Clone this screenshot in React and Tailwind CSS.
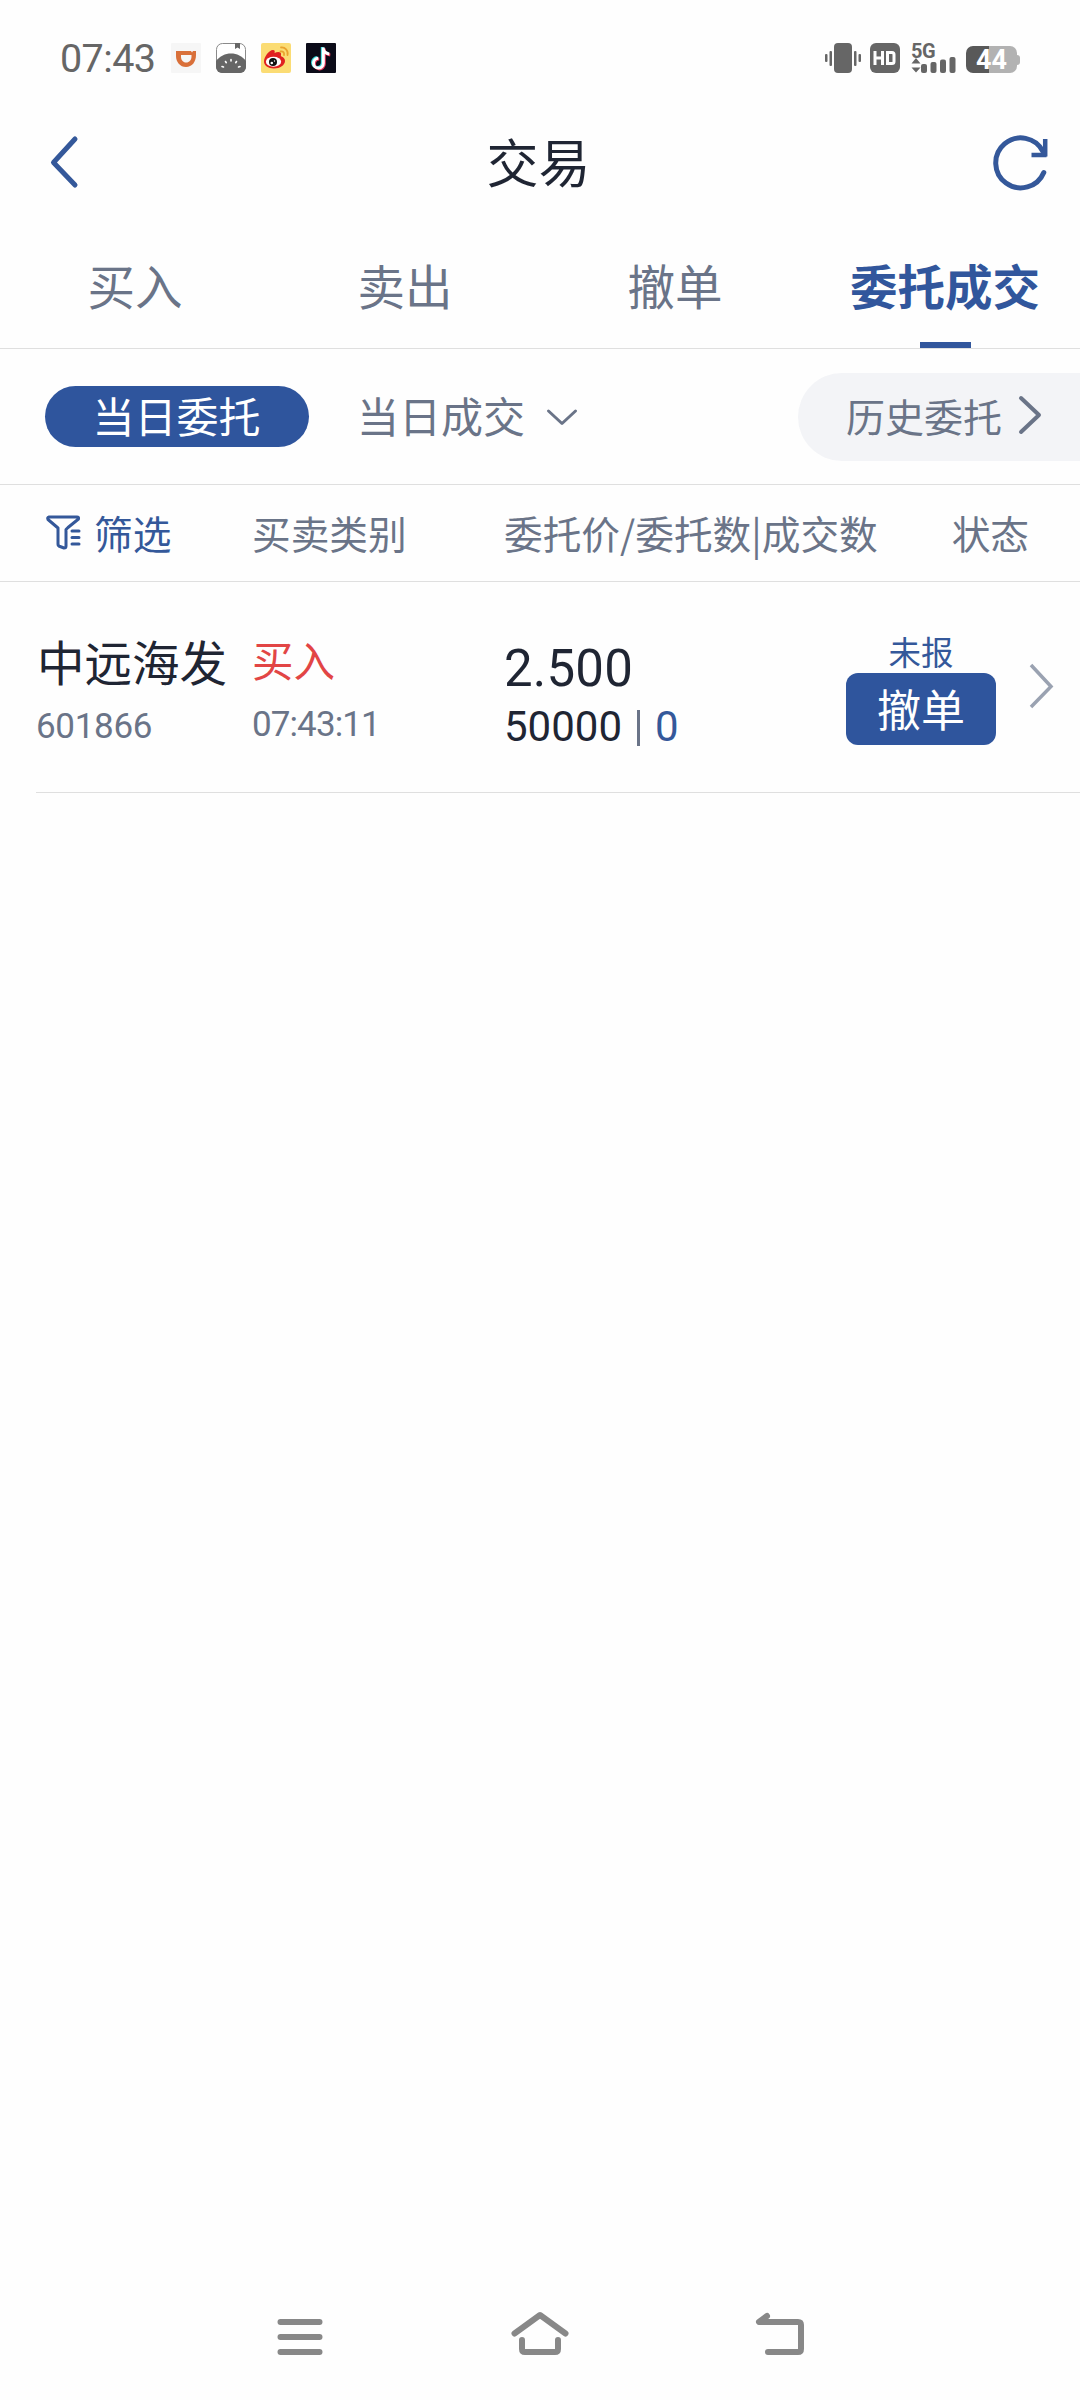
import React, { useState } from 'react';

const TABS = ['买入', '卖出', '撤单', '委托成交'];

const orders = [
    { id: 1, name: '中远海发', code: '601866', side: '买入', time: '07:43:11', price: '2.500', amount: '50000', filled: '0', status: '未报' },
];

const StatusBar = () => (
    <div className="h-[108px] pl-[60px] pr-[60px] pt-2 flex items-center justify-between">
        <div className="flex items-center">
            <span className="w-[111px] pt-[2px] font-['Roboto',sans-serif] text-[39.5px] leading-none tracking-[-0.6px] text-[#666]">07:43</span>
            <div className="flex gap-[15px]">
                {/* Didi */}
                <svg width="30" height="30" viewBox="0 0 30 30">
                    <rect width="30" height="30" rx="1" fill="#f6f6f6" />
                    <path d="M5 8h15l1 1.500 1-1.500h3v4c0 7-4 12-10 12S5 19 5 13zM10 12v1.500c0 3.500 2 6 5.200 6s5.300-2.500 5.300-6V12z" fill="#d9703a" fillRule="evenodd" />
                </svg>
                {/* Notes */}
                <svg width="30" height="30" viewBox="0 0 30 30">
                    <rect x="0.5" y="0.5" width="29" height="29" rx="6" fill="#fff" stroke="#8a8a8a" />
                    <path d="M0 18C4 13 9 10.500 15 10.500S26 13 30 18v6a6 6 0 0 1-6 6H6a6 6 0 0 1-6-6z" fill="#666" />
                    <path d="M19 0h5v6l-2.500-1.500L19 6z" fill="#666" />
                    <path d="M15 16.500v1.500M9.500 18.500l.8 1.200M20.500 18.500l-.8 1.200M6 23.500l1.500.5M24 23.500l-1.500.5" stroke="#fff" strokeWidth="1.600" strokeLinecap="round" />
                </svg>
                {/* Weibo */}
                <svg width="30" height="30" viewBox="0 0 30 30">
                    <rect width="30" height="30" rx="2" fill="#fbdc74" />
                    <path d="M12 7c2 0 2 1.500 1.500 3 3-1.500 7-1.500 6.500 1.500 0 1-.5 1.500.5 2 2.500 1 3.500 2.500 3.500 4.500 0 4-5 7.500-11 7.500S3 22.500 3 18.500C3 14 8 7 12 7z" fill="#e02020" />
                    <ellipse cx="12.500" cy="18.800" rx="7.600" ry="5" fill="#fff" />
                    <circle cx="12" cy="19" r="4" fill="#111" />
                    <circle cx="10.800" cy="20" r="1.300" fill="#fff" />
                    <circle cx="13.500" cy="18" r="0.700" fill="#fff" />
                    <path d="M20 4.500c4-.5 7.500 3 6.500 7.500M19.500 8.500c2.500-.5 4 1.200 3.500 3.500" fill="none" stroke="#eaa22e" strokeWidth="1.800" strokeLinecap="round" />
                </svg>
                {/* Douyin */}
                <svg width="30" height="30" viewBox="0 0 30 30" fill="none" strokeWidth="3">
                    <rect width="30" height="30" rx="1" fill="#0b0b18" />
                    <path d="M16.300 4v15.500a4.900 4.900 0 1 1-5-4.900M16.300 5.500c.7 3 2.700 4.500 6 4.900" stroke="#35d8dc" />
                    <path d="M18.300 5.500V21a4.900 4.900 0 1 1-5-4.900M18.300 7c.7 3 2.700 4.500 6 4.900" stroke="#e8385a" />
                    <path d="M17.300 4.500v15.700a4.900 4.900 0 1 1-5-4.900M17.300 6c.7 3 2.700 4.500 6 4.900" stroke="#fff" />
                </svg>
            </div>
        </div>
        <div className="flex items-center text-[#666]">
            {/* Vibrate */}
            <svg width="36" height="30" viewBox="0 0 36 30" fill="currentColor">
                <rect x="9" width="18" height="30" rx="4" />
                <rect x="0" y="11" width="2.500" height="8" rx="1" />
                <rect x="4.500" y="8" width="2.500" height="15" rx="1" />
                <rect x="29" y="8" width="2.500" height="15" rx="1" />
                <rect x="33.500" y="11" width="2.500" height="8" rx="1" />
            </svg>
            <svg className="ml-[9px]" width="30" height="30" viewBox="0 0 30 30">
                <rect width="30" height="30" rx="6" fill="#666" />
                <path d="M5 8v14M12.500 8v14M5 15h7.500M17.500 9.500h4.500q2 0 2 2v7q0 2-2 2h-4.500z" fill="none" stroke="#fff" strokeWidth="3" />
            </svg>
            <div className="ml-[11px] w-[46px] h-[30px]">
                <div className="h-[15px] font-['Roboto',sans-serif] font-bold text-[20px] leading-[16px] tracking-[-0.500px]">5G</div>
                <svg width="46" height="15" viewBox="0 0 46 15" fill="currentColor" overflow="visible">
                    <path d="M5 0l4.500 5.500H0.500zM5 14.500L0.500 9.500h9z" />
                    <rect x="10" y="6" width="6" height="9" rx="2" />
                    <rect x="19.500" y="4" width="6" height="11" rx="2" />
                    <rect x="29" y="1.500" width="6" height="13.500" rx="2" />
                    <rect x="38.500" y="-1" width="6" height="16" rx="2" />
                </svg>
            </div>
            <div className="ml-[9px] mt-[3px] flex items-center">
                <div className="w-[51px] h-[27px] rounded-[7px] bg-linear-to-r from-[#595959] from-45% to-[#b2b2b2] to-45% flex items-center justify-center">
                    <span className="font-['Roboto',sans-serif] font-bold text-[27px] leading-[28px] text-white">44</span>
                </div>
                <div className="w-[3px] h-[10px] rounded-r-[3px] bg-[#b2b2b2]" />
            </div>
        </div>
    </div>
);

const Header = () => (
    <div className="h-[108px] pl-[49px] pr-[30px] flex items-center justify-between">
        <svg className="mr-[6px]" width="30" height="54" viewBox="0 0 30 54" fill="none" stroke="#34589a" strokeWidth="5" strokeLinecap="round" strokeLinejoin="round">
            <path d="M26 4L4.500 27.500 26 50" />
        </svg>
        <h1 className="pb-[2px] text-[52px] leading-[60px] text-[#1f2533]">交易</h1>
        <svg width="58" height="58" viewBox="0 0 58 58" fill="none" stroke="#34589a" strokeWidth="5">
            <path d="M51.800 39.500A25 25 0 1 1 51 18.500" strokeLinecap="round" />
            <path d="M53.200 6v17.500M39.500 22h15" strokeWidth="4.500" strokeLinejoin="round" />
        </svg>
    </div>
);

const App = () => {
    const [activeTab, setActiveTab] = useState('委托成交');

    return (
        <div className="w-[1080px] h-[2400px] bg-[#fefefe] flex flex-col font-['Noto_Sans_CJK_SC',sans-serif] text-[#6a7488]">
            <StatusBar />
            <Header />

            {/* Abas principais */}
            <div className="h-[133px] flex border-b border-[#dfdfdf]">
                {TABS.map((tab) => (
                    <button
                        key={tab}
                        onClick={() => setActiveTab(tab)}
                        className={`w-[270px] flex flex-col items-center justify-between pt-[37px] text-[47.500px] leading-[64px] whitespace-nowrap ${tab === activeTab ? 'font-bold text-[#31569c]' : ''}`}
                    >
                        {tab}
                        {tab === activeTab && <span className="w-[51px] h-[6px] bg-[#31569c]" />}
                    </button>
                ))}
            </div>

            <div className="h-[136px] pl-[45px] flex items-center border-b border-[#dfdfdf]">
                <button className="w-[264px] h-[61px] pb-[4px] pr-[1px] rounded-full bg-[#2f559d] text-white text-[42px] leading-[56px]">当日委托</button>
                <button className="ml-[48px] pb-[2px] flex items-center text-[42px] leading-[56px]">
                    <span className="-mt-[2px]">当日成交</span>
                    <svg className="ml-[20px] mt-[2px]" width="34" height="20" viewBox="0 0 34 20" fill="none" stroke="currentColor" strokeWidth="3" strokeLinecap="round" strokeLinejoin="round">
                        <path d="M3.500 4L17 16.500 30.500 4" />
                    </svg>
                </button>
                <button className="ml-auto w-[282px] h-[88px] pl-[48px] rounded-l-full bg-[#f3f4f7] flex items-center text-[39px] leading-[56px]">
                    <span className="pb-[3px]">历史委托</span>
                    <svg className="ml-[15px] mb-[3px]" width="26" height="42" viewBox="0 0 26 42" fill="none" stroke="currentColor" strokeWidth="4" strokeLinecap="round" strokeLinejoin="round">
                        <path d="M4 4l18 17L4 38" />
                    </svg>
                </button>
            </div>

            <div className="h-[97px] pl-[45px] pb-[2px] flex items-center border-b border-[#dfdfdf] text-[38.700px] leading-[56px] whitespace-nowrap">
                <div className="w-[207px] flex items-center gap-[13px] text-[#34589a]">
                    <svg width="36" height="36" viewBox="0 0 36 36" fill="none" stroke="currentColor" strokeWidth="3" strokeLinecap="round" strokeLinejoin="round">
                        <path d="M4 3h28q2 0 1.500 2L23 13.500M4 3Q2 3.500 3 5.500L13 14v16q0 2 2 2.500l4 1.500q2 0 2-2V15.500L23 13.500" />
                        <path d="M27 17h7M27 23.500h7M27 30h7" />
                    </svg>
                    筛选
                </div>
                <div className="w-[252px]">买卖类别</div>
                <div>委托价/委托数|成交数</div>
                <div className="ml-auto pr-[51px]">状态</div>
            </div>

            {orders.map((o) => (
                <div key={o.id} className="ml-[36px] h-[211px] flex border-b border-[#dfdfdf] whitespace-nowrap">
                    <div className="w-[216px] pt-[47px]">
                        <div className="pl-[1px] text-[47.500px] leading-[64px] text-[#1f2533]">{o.name}</div>
                        <div className="pt-[14px] font-['Roboto',sans-serif] text-[35px] leading-[40px] tracking-[-0.300px]">{o.code}</div>
                    </div>
                    <div className="w-[252px] pt-[47px]">
                        <div className="text-[41.500px] leading-[60px] text-[#e24545]">{o.side}</div>
                        <div className="pt-[16px] font-['Roboto',sans-serif] text-[35px] leading-[40px] tracking-[-0.900px]">{o.time}</div>
                    </div>
                    <div className="w-[342px] pt-[57px] font-['Roboto',sans-serif] text-[#1f2533]">
                        <div className="text-[51px] leading-[60px] tracking-[0.200px]">{o.price}</div>
                        <div className="flex items-center text-[42px] leading-[56px]">
                            {o.amount}
                            <span className="ml-[15px] mr-[15px] mt-[2px] w-[3px] h-[36px] bg-[#6a7488]" />
                            <span className="text-[#34589a]">{o.filled}</span>
                        </div>
                    </div>
                    <div className="w-[150px] pt-[47px] flex flex-col items-center">
                        <div className="text-[32.500px] leading-[44px] text-[#34589a]">{o.status}</div>
                        <button className="w-[150px] h-[72px] pb-[2px] rounded-[12px] bg-[#2f559d] text-white text-[44px] leading-[64px]">撤单</button>
                    </div>
                    <svg className="ml-[33px] mt-[81px]" width="26" height="46" viewBox="0 0 26 46" fill="none" stroke="#9aa2b1" strokeWidth="3.500">
                        <path d="M2 2l20 21.500L2 44" />
                    </svg>
                </div>
            ))}

            {/* Barra de navegação do sistema */}
            <div className="mt-auto h-[132px] flex justify-center gap-[180px] pt-[36px]">
                <svg width="60" height="60" viewBox="0 0 60 60" stroke="#888" strokeWidth="6" strokeLinecap="round">
                    <path d="M10.500 18h39M10.500 33h39M10.500 48h39" />
                </svg>
                <svg width="60" height="60" viewBox="0 0 60 60" fill="none" stroke="#888" strokeWidth="6" strokeLinecap="round" strokeLinejoin="round">
                    <path d="M4.500 29.500L30 11l25.500 18.500M12 36v9q0 3 3 3h30q3 0 3-3v-9" />
                </svg>
                <svg width="60" height="60" viewBox="0 0 60 60" fill="none" stroke="#888" strokeWidth="6" strokeLinecap="round" strokeLinejoin="round">
                    <path d="M17 12L9 18h39q3 0 3 3v24q0 3-3 3H18" />
                </svg>
            </div>
        </div>
    );
};

export default App;
